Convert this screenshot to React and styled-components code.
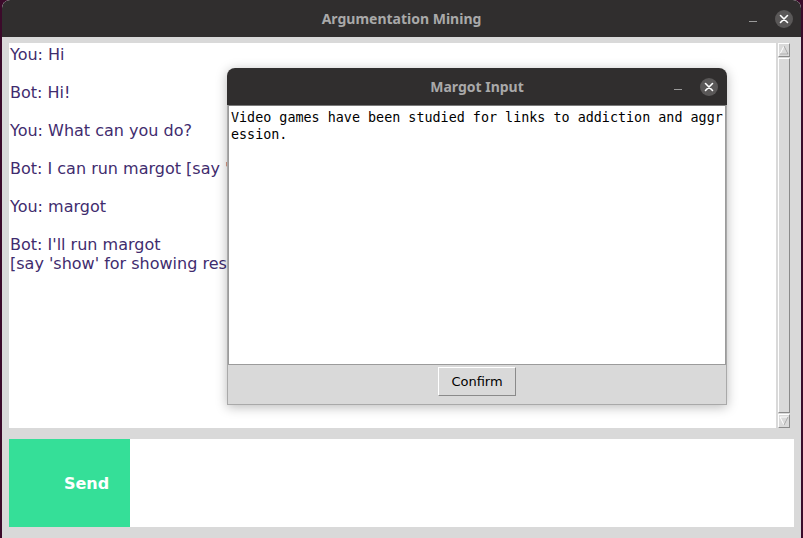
import React from "react";
import styled, { createGlobalStyle } from "styled-components";

const Global = createGlobalStyle`
  html, body { margin: 0; padding: 0; background: #3b0a2a; overflow: hidden; }
  body { width: 803px; height: 538px; }
  #root { width: 803px; height: 538px; }
`;

const Desktop = styled.div`
  position: relative;
  width: 803px;
  height: 538px;
  padding-left: 2px;
  box-sizing: border-box;
`;

const Window = styled.div`
  width: 799px;
  height: 538px;
  display: flex;
  flex-direction: column;
  background: #d9d9d9;
  border-radius: 8px 8px 0 0;
  overflow: hidden;
`;

const TitleBar = styled.div`
  position: relative;
  height: ${(p) => p.$h}px;
  flex: 0 0 auto;
  background: #302e2e;
  display: flex;
  align-items: center;
  justify-content: center;
  font-family: "Noto Sans", "DejaVu Sans", sans-serif;
  font-weight: 700;
  font-size: 14px;
  color: #a9a9a9;
  border-radius: 8px 8px 0 0;
`;

const TitleControls = styled.div`
  position: absolute;
  right: ${(p) => p.$right}px;
  top: 0;
  bottom: 0;
  display: flex;
  align-items: center;
  gap: 18px;
`;

const MinLine = styled.div`
  width: 8px;
  height: 1px;
  background: #9a9a9a;
  margin-top: 6px;
`;

const CloseCircle = styled.div`
  width: 18px;
  height: 18px;
  border-radius: 50%;
  background: #5a5858;
  display: flex;
  align-items: center;
  justify-content: center;
`;

const Body = styled.div`
  flex: 1;
  display: flex;
  flex-direction: column;
  padding: 6px 7px 11px 7px;
  box-sizing: border-box;
`;

const ChatRow = styled.div`
  display: flex;
  height: 385px;
  margin-right: 4px;
  gap: 2px;
`;

const ChatArea = styled.div`
  flex: 1;
  background: #ffffff;
  padding: 2px 2px 0 1px;
  font-family: "DejaVu Sans", sans-serif;
  font-size: 16px;
  line-height: 19px;
  color: #3f2c6e;
  white-space: pre;
  overflow: hidden;
`;

const Line = styled.div`
  height: 19px;
`;

const Scrollbar = styled.div`
  width: 12px;
  display: flex;
  flex-direction: column;
  background: #d9d9d9;
`;

const Arrow = styled.div`
  height: 14px;
  flex: 0 0 auto;
  box-sizing: border-box;
  border: 1px solid;
  border-color: #ffffff #8a8a8a #8a8a8a #ffffff;
  display: flex;
  align-items: center;
  justify-content: center;
  background: #d9d9d9;
`;

const Thumb = styled.div`
  flex: 1;
  margin: 1px 0;
  box-sizing: border-box;
  border: 1px solid;
  border-color: #ffffff #8a8a8a #8a8a8a #ffffff;
  background: #d9d9d9;
`;

const InputRow = styled.div`
  display: flex;
  height: 88px;
  margin-top: 11px;
`;

const SendButton = styled.button`
  width: 121px;
  border: none;
  background: #35df98;
  color: #ffffff;
  font-family: "DejaVu Sans", sans-serif;
  font-weight: 700;
  font-size: 16px;
  padding: 0 0 0 34px;
  margin: 0;
  display: flex;
  align-items: center;
  justify-content: center;
`;

const InputField = styled.div`
  flex: 1;
  background: #ffffff;
`;

const Dialog = styled.div`
  position: absolute;
  left: 227px;
  top: 68px;
  width: 500px;
  height: 337px;
  display: flex;
  flex-direction: column;
  border-radius: 8px 8px 0 0;
  box-shadow: 0 2px 12px rgba(0, 0, 0, 0.28);
`;

const DialogBody = styled.div`
  flex: 1;
  display: flex;
  flex-direction: column;
  background: #d9d9d9;
  border: 1px solid #a9a9a9;
  border-top: none;
`;

const TextBox = styled.div`
  height: 260px;
  background: #ffffff;
  border: 1px solid #9b9b9b;
  border-top-color: #7a7a7a;
  padding: 3px 2px 0 2px;
  font-family: "DejaVu Sans Mono", monospace;
  font-size: 13.4px;
  line-height: 17px;
  color: #000000;
  word-break: break-all;
  white-space: pre-wrap;
  box-sizing: border-box;
`;

const Footer = styled.div`
  flex: 1;
  display: flex;
  justify-content: center;
  align-items: flex-start;
  padding-top: 2px;
`;

const ConfirmButton = styled.button`
  width: 78px;
  height: 29px;
  box-sizing: border-box;
  background: #d9d9d9;
  border: 1px solid;
  border-color: #ffffff #8a8a8a #8a8a8a #ffffff;
  font-family: "DejaVu Sans", sans-serif;
  font-size: 13px;
  color: #000000;
  padding: 0;
`;

const CloseX = () => (
  <svg width="10" height="10" viewBox="0 0 10 10">
    <path d="M1.5 1.5 L8.5 8.5 M8.5 1.5 L1.5 8.5" stroke="#ffffff" strokeWidth="1.6" strokeLinecap="round" />
  </svg>
);

const chat = [
  "You: Hi",
  "",
  "Bot: Hi!",
  "",
  "You: What can you do?",
  "",
  "Bot: I can run margot [say 'margot' to run it]",
  "",
  "You: margot",
  "",
  "Bot: I'll run margot",
  "[say 'show' for showing results]",
];

export default function App() {
  return (
    <>
      <Global />
      <Desktop>
        <Window>
          <TitleBar $h={37}>
            Argumentation Mining
            <TitleControls $right={8}>
              <MinLine />
              <CloseCircle>
                <CloseX />
              </CloseCircle>
            </TitleControls>
          </TitleBar>
          <Body>
            <ChatRow>
              <ChatArea>
                {chat.map((l, i) => (
                  <Line key={i}>{l}</Line>
                ))}
              </ChatArea>
              <Scrollbar>
                <Arrow>
                  <svg width="10" height="10" viewBox="0 0 10 10">
                    <path d="M5 1 L9 9 L1 9 Z" fill="#d9d9d9" stroke="#ffffff" strokeWidth="1" />
                    <path d="M5 1 L9 9 L1 9" fill="none" stroke="#8a8a8a" strokeWidth="0.8" />
                  </svg>
                </Arrow>
                <Thumb />
                <Arrow>
                  <svg width="10" height="10" viewBox="0 0 10 10">
                    <path d="M1 1 L9 1 L5 9 Z" fill="#d9d9d9" stroke="#ffffff" strokeWidth="1" />
                    <path d="M9 1 L5 9" fill="none" stroke="#8a8a8a" strokeWidth="0.8" />
                  </svg>
                </Arrow>
              </Scrollbar>
            </ChatRow>
            <InputRow>
              <SendButton>Send</SendButton>
              <InputField />
            </InputRow>
          </Body>
        </Window>
        <Dialog>
          <TitleBar $h={37}>
            Margot Input
            <TitleControls $right={9}>
              <MinLine />
              <CloseCircle>
                <CloseX />
              </CloseCircle>
            </TitleControls>
          </TitleBar>
          <DialogBody>
            <TextBox>Video games have been studied for links to addiction and aggression.</TextBox>
            <Footer>
              <ConfirmButton>Confirm</ConfirmButton>
            </Footer>
          </DialogBody>
        </Dialog>
      </Desktop>
    </>
  );
}
